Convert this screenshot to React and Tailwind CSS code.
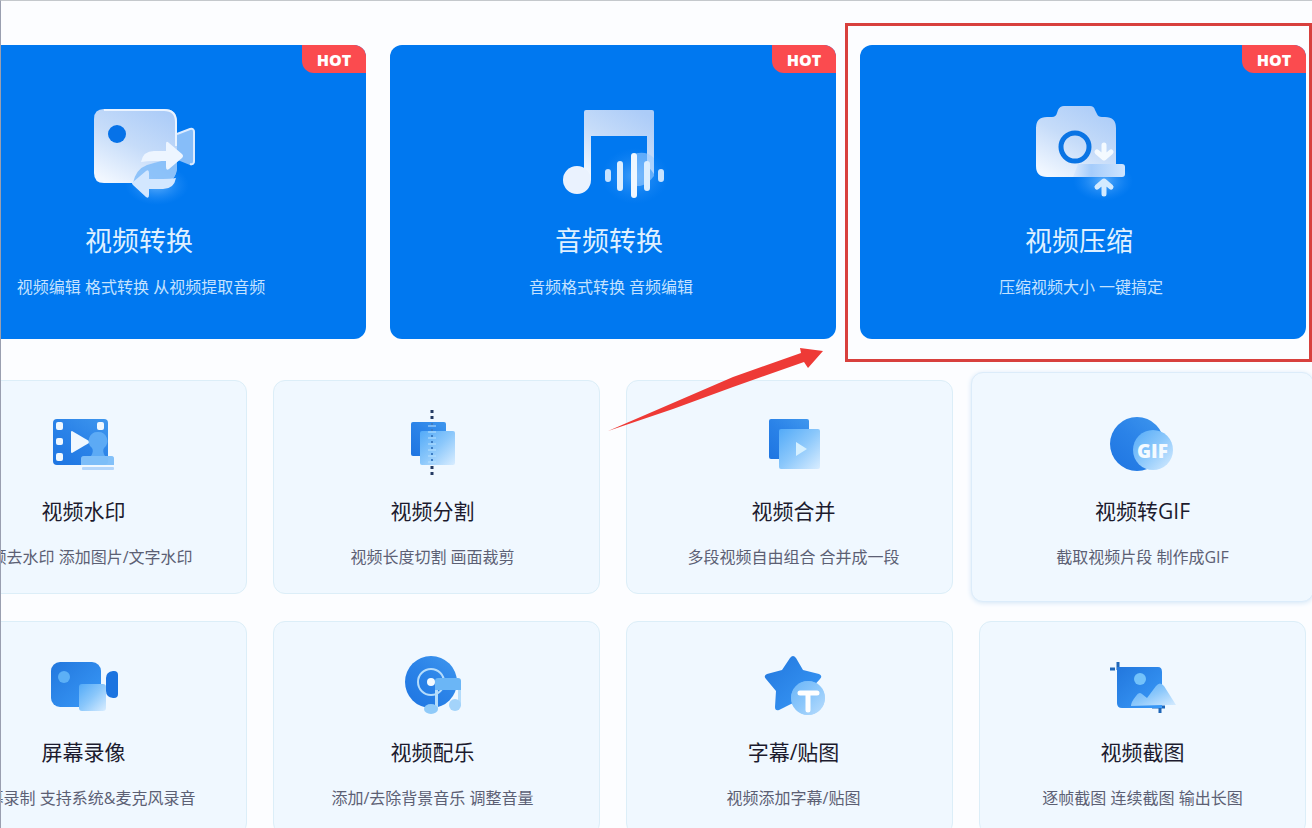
import { clsx } from 'clsx';

function Gradients() {
  return (
    <svg className="absolute h-0 w-0" aria-hidden="true">
      <defs>
        <linearGradient id="frost" x1="0.8" y1="0" x2="0.2" y2="1">
          <stop offset="0" stopColor="#acccf8" />
          <stop offset="0.5" stopColor="#c6dcf9" />
          <stop offset="1" stopColor="#f1f7ff" />
        </linearGradient>
        <linearGradient id="deep" x1="1" y1="0" x2="0.1" y2="1">
          <stop offset="0" stopColor="#3f97ee" />
          <stop offset="0.5" stopColor="#2b83e8" />
          <stop offset="1" stopColor="#1f76e2" />
        </linearGradient>
        <linearGradient id="azure" x1="0" y1="0" x2="1" y2="1">
          <stop offset="0" stopColor="#2277dd" />
          <stop offset="1" stopColor="#3a9af8" />
        </linearGradient>
        <linearGradient id="glass" x1="0" y1="0" x2="1" y2="1">
          <stop offset="0" stopColor="#52aaf8" />
          <stop offset="0.5" stopColor="#8cc8fb" />
          <stop offset="1" stopColor="#d9edff" />
        </linearGradient>
        <linearGradient id="plate" x1="0" y1="0" x2="1" y2="0">
          <stop offset="0" stopColor="#dceafd" />
          <stop offset="0.35" stopColor="#a5ccfb" />
          <stop offset="1" stopColor="#cfe5fe" />
        </linearGradient>
        <radialGradient id="glow">
          <stop offset="0" stopColor="#7fc1ff" stopOpacity="0.75" />
          <stop offset="1" stopColor="#2d93fb" stopOpacity="0" />
        </radialGradient>
      </defs>
    </svg>
  );
}

const ConvertIcon = () => (
  <>
    <ellipse cx="74" cy="88" rx="32" ry="20" fill="url(#glow)" />
    <path d="M92 37l15-5q5-1 5 4v27q0 6-5 5l-15-6z" fill="#86bdf9" />
    <path d="M94 37l13-5q4-1 4 3v29q0 4-4 3" fill="none" stroke="#dcebff" strokeWidth="2" />
    <path d="M21 12h60q13 0 13 13v44q0 17-17 17H21q-10 0-10-10V22q0-10 10-10z" fill="url(#frost)" />
    <path d="M21 13h60q12 0 12 12v24" fill="none" stroke="#eaf3ff" strokeWidth="2" />
    <path d="M94 61v8q0 17-17 17H50q3-14 14-18 16-5 30-7z" fill="#7bb9f9" opacity="0.8" />
    <circle cx="34" cy="37" r="9" fill="#0672e8" />
    <path d="M58 65q2-11 13-11h12v-7q0-4 3-1l13 11q2 2 0 4L86 72q-3 2-3-2v-6H72q-8 0-14 1z" fill="#edf5ff" />
    <path d="M93 81q-2 11-13 11H66v6q0 4-3 2L50 88q-2-2 0-3l13-11q3-2 3 2v6h14q8 0 13-1z" fill="#d3e7ff" />
  </>
);

const MusicIcon = () => (
  <>
    <ellipse cx="82" cy="79" rx="34" ry="28" fill="url(#glow)" opacity="0.7" />
    <path d="M33 13h66q2 0 2 2v62q-4-6-7-8V39H38v44h-7V15q0-2 2-2z" fill="url(#frost)" />
    <circle cx="24" cy="83" r="14" fill="#eaf2fe" />
    <path d="M81 57q12-4 20 4v18q-6 8-14 10h-6z" fill="#9bcbff" opacity="0.6" />
    <g stroke="#eff7ff" strokeWidth="6" strokeLinecap="round">
      <path d="M55 75v7M108 75v7" stroke="#c6e2ff" />
      <path d="M67 67v24M94 67v24" stroke="#dceeff" />
      <path d="M81 59v39" />
    </g>
  </>
);

const CompressIcon = () => (
  <>
    <ellipse cx="80" cy="84" rx="30" ry="20" fill="url(#glow)" />
    <path
      d="M41 9h26q4 0 5 4l2 4q1 3 5 3h3q11 0 11 11v49H24q-11 0-11-11V31q0-11 11-11h5q4 0 5-4l1-3q2-4 6-4z"
      fill="url(#frost)"
    />
    <circle cx="52" cy="50" r="14" fill="none" stroke="#0a74e4" strokeWidth="5" />
    <path d="M55 67h44q3 0 3 3v7q0 3-3 3H50z" fill="url(#plate)" />
    <g fill="none" stroke="#f4faff" strokeWidth="5" strokeLinecap="round" strokeLinejoin="round">
      <path d="M81 48v12M74 55l7 6 7-6" />
      <path d="M81 97V85M74 90l7-6 7 6" stroke="#d3eaff" />
    </g>
  </>
);

const WatermarkIcon = () => (
  <>
    <rect x="10" y="10" width="55" height="46" rx="4" fill="url(#deep)" />
    <g fill="#f0f8ff">
      <rect x="13" y="13" width="7" height="8" rx="2" />
      <rect x="13" y="29" width="7" height="7" rx="2" />
      <rect x="13" y="44" width="7" height="8" rx="2" />
      <rect x="54" y="13" width="7" height="8" rx="2" />
      <path d="M28 23v20q0 1 1 1l17-10q1-1 0-2L29 22q-1 0-1 1z" />
    </g>
    <path d="M55 23a9 9 0 0 1 6 16q-2 3 1 8h6q3 0 3 3v6H38v-6q0-3 3-3h7q3-5 1-8a9 9 0 0 1 6-16z" fill="#62aef6" opacity="0.9" />
    <path d="M38 50q0-3 3-3h27q3 0 3 3v6H38z" fill="#8cc6fa" opacity="0.7" />
    <rect x="39" y="58" width="32" height="3" rx="1" fill="#b4d6fb" />
  </>
);

const SplitIcon = () => (
  <>
    <rect x="19" y="13" width="35" height="34" rx="2" fill="url(#deep)" />
    <rect x="28" y="22" width="35" height="34" rx="2" fill="url(#glass)" />
    <path d="M40 16v40" stroke="#b9e2ff" strokeWidth="8" strokeDasharray="2 4" opacity="0.5" />
    <path d="M40 14v42" stroke="#3d7dc4" strokeWidth="2" strokeDasharray="2 4" />
    <path d="M40 1v10M40 57v10" stroke="#243a63" strokeWidth="3" strokeDasharray="3 3" />
  </>
);

const MergeIcon = () => (
  <>
    <rect x="16" y="10" width="40" height="40" rx="2" fill="url(#deep)" />
    <rect x="26" y="20" width="41" height="40" rx="2" fill="url(#glass)" />
    <path d="M43 33v14l11-7z" fill="#d5f0ff" />
  </>
);

const GifIcon = () => (
  <>
    <circle cx="35" cy="35" r="27" fill="url(#deep)" />
    <circle cx="51" cy="41" r="20" fill="url(#glass)" />
    <text x="35" y="49" fill="#f4faff" fontSize="19" className="font-['Open_Sans',sans-serif] font-extrabold">
      GIF
    </text>
  </>
);

const RecordIcon = () => (
  <>
    <rect x="8" y="12" width="50" height="45" rx="9" fill="url(#azure)" />
    <circle cx="21" cy="27" r="6" fill="#5cb0f6" />
    <path d="M70 21h1q4 0 4 4v19q0 4-4 4h-1q-7-1-7-7V28q0-6 7-7z" fill="#1c74e0" />
    <rect x="36" y="34" width="27" height="27" rx="3" fill="url(#glass)" />
  </>
);

const SoundtrackIcon = () => (
  <>
    <circle cx="39" cy="32" r="26" fill="url(#deep)" />
    <circle cx="39" cy="32" r="13" fill="none" stroke="#b5dcfb" strokeWidth="2" />
    <circle cx="39" cy="32" r="4" fill="#f3faff" />
    <path d="M43 38h3v21h-3zM66 38h3v18h-3z" fill="#b4dcfb" />
    <ellipse cx="39" cy="59" rx="7" ry="5" fill="#8fcaf9" />
    <ellipse cx="63" cy="55" rx="6" ry="6" fill="#a3d3fa" />
    <path d="M43 31q0-3 3-3h20q3 0 3 3v9H43z" fill="#6bb6f6" />
  </>
);

const StickerIcon = () => (
  <>
    <path
      d="M37 8q3-4 6 0l7 12 16 4q4 2 1 5L56 41l2 15q0 5-4 3l-14-6-14 7q-4 1-4-3l1-16-10-12q-3-3 1-5l15-4z"
      fill="url(#azure)"
    />
    <circle cx="55" cy="48" r="17" fill="#8cc6fa" />
    <circle cx="55" cy="48" r="17" fill="url(#glass)" opacity="0.6" />
    <path d="M47 43h17M55 43v17" stroke="#fff" strokeWidth="5" strokeLinecap="round" />
  </>
);

const ScreenshotIcon = () => (
  <>
    <path d="M8 19h5M16 12v8M50 57h13M58 57v6" stroke="#1f66b8" strokeWidth="3" />
    <path d="M15 17h41q4 0 4 5v36H20q-5 0-5-5z" fill="url(#azure)" />
    <circle cx="38" cy="29" r="6" fill="#74c2fa" />
    <path d="M29 56q0-4 5-10 3-5 6-2l5 4 9-12q4-5 8 0l12 19H60z" fill="url(#glass)" />
  </>
);

const heroTools = [
  { title: '视频转换', desc: '视频编辑 格式转换 从视频提取音频', Icon: ConvertIcon },
  { title: '音频转换', desc: '音频格式转换 音频编辑', Icon: MusicIcon },
  { title: '视频压缩', desc: '压缩视频大小 一键搞定', Icon: CompressIcon, marked: true },
];

const tools = [
  { title: '视频水印', desc: '视频去水印 添加图片/文字水印', Icon: WatermarkIcon },
  { title: '视频分割', desc: '视频长度切割 画面裁剪', Icon: SplitIcon, pad: 'pr-2' },
  { title: '视频合并', desc: '多段视频自由组合 合并成一段', Icon: MergeIcon, pad: 'pl-2' },
  { title: '视频转GIF', desc: '截取视频片段 制作成GIF', Icon: GifIcon, active: true },
  { title: '屏幕录像', desc: '屏幕录制 支持系统&麦克风录音', Icon: RecordIcon },
  { title: '视频配乐', desc: '添加/去除背景音乐 调整音量', Icon: SoundtrackIcon, pad: 'pr-2' },
  { title: '字幕/贴图', desc: '视频添加字幕/贴图', Icon: StickerIcon, pad: 'pl-2' },
  { title: '视频截图', desc: '逐帧截图 连续截图 输出长图', Icon: ScreenshotIcon },
];

// Red frame and arrow drawn over the tool the guide is talking about
function Marker() {
  return (
    <div className="pointer-events-none">
      <div className="absolute -top-[22px] -right-1.5 -bottom-[23px] -left-[15px] border-[3px] border-[#d8403d]" />
      <svg className="absolute top-[302px] right-full z-10 mr-9 h-[86px] w-[217px]" viewBox="0 0 217 86" aria-hidden="true">
        <path d="M1 84L126 30l68-24-1-5 23 3-15 17-4-6-71 25-60 22z" fill="#ee3a36" />
      </svg>
    </div>
  );
}

function HeroCard({ title, desc, Icon, marked }) {
  return (
    <div className="relative">
      <button
        type="button"
        className="relative flex w-full cursor-pointer flex-col items-center overflow-hidden rounded-xl bg-[#0078f0] pt-[52px] pb-10"
      >
        <span className="absolute top-0 right-0 flex h-7 w-16 items-center justify-center rounded-bl-xl bg-[#fb4b4f] pt-0.5 text-base leading-6 font-extrabold text-white">
          HOT
        </span>
        <svg className="h-[110px] w-[120px]" viewBox="0 0 120 110" aria-hidden="true">
          <Icon />
        </svg>
        <span className="mt-3.5 pr-2 text-[27px] leading-10 whitespace-nowrap text-[#dff0ff]">{title}</span>
        <span className="mt-3.5 pr-1 text-base leading-6 whitespace-nowrap text-[#c4e2ff]">{desc}</span>
      </button>
      {marked && <Marker />}
    </div>
  );
}

function ToolCard({ title, desc, Icon, pad, active }) {
  return (
    <button
      type="button"
      className={clsx(
        'flex cursor-pointer flex-col items-center rounded-xl border bg-[#f0f8ff]',
        active ? '-m-2 border-[#dcecfa] pt-9 pb-8 shadow-[0_1px_5px_#d3e6f6]' : 'border-[#dceef8] pt-7 pb-6',
        pad
      )}
    >
      <svg className="h-[72px] w-[81px]" viewBox="0 0 81 72" aria-hidden="true">
        <Icon />
      </svg>
      <span className="mt-3.5 text-[21px] leading-8 whitespace-nowrap text-[#1c1b2e]">{title}</span>
      <span className="mt-[18px] text-base leading-6 whitespace-nowrap text-[#5c6074]">{desc}</span>
    </button>
  );
}

export default function App() {
  return (
    <main className="h-screen overflow-hidden border-t border-l border-t-[#c4c8cc] border-l-[#9a9fb0] bg-[#fcfdff] pt-11 font-['Open_Sans','Noto_Sans_CJK_SC',sans-serif]">
      <Gradients />
      <div className="mr-1.5 -ml-[81px]">
        <section className="grid grid-cols-3 gap-6">
          {heroTools.map(tool => (
            <HeroCard key={tool.title} {...tool} />
          ))}
        </section>
        <section className="mt-[41px] grid grid-cols-4 gap-x-[26px] gap-y-[27px]">
          {tools.map(tool => (
            <ToolCard key={tool.title} {...tool} />
          ))}
        </section>
      </div>
    </main>
  );
}
